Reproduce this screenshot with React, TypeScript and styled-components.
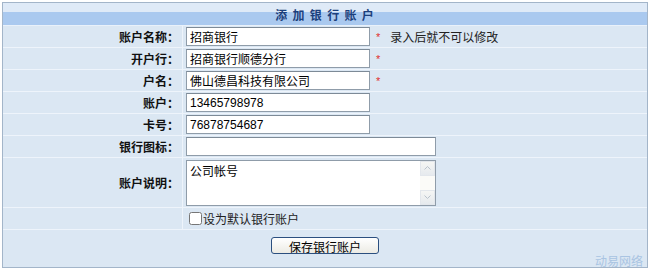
import styled, {createGlobalStyle} from "styled-components";

const Global = createGlobalStyle`
    html, body {
        margin: 0;
        padding: 0;
        background: #ffffff;
    }
    body {
        font-family: "Liberation Sans", "Noto Sans CJK SC", sans-serif;
        font-size: 12px;
        color: #000;
    }
`;

const fields = [
    {label: "账户名称：", value: "招商银行", required: true, hint: "录入后就不可以修改"},
    {label: "开户行：", value: "招商银行顺德分行", required: true},
    {label: "户名：", value: "佛山德昌科技有限公司", required: true},
    {label: "账户：", value: "13465798978"},
    {label: "卡号：", value: "76878754687"},
];

function Arrow({up}: { up?: boolean }) {
    return (
        <svg width="7" height="4" viewBox="0 0 7 4">
            <path d={up ? "M0.5 3.5 L3.5 0.5 L6.5 3.5" : "M0.5 0.5 L3.5 3.5 L6.5 0.5"}
                  fill="none" stroke="#b9c2cc" strokeWidth="1"/>
        </svg>
    );
}

export default function App() {
    return (
        <>
            <Global/>
            <Page>
                <Panel>
                    <Header>添 加 银 行 账 户</Header>

                    {fields.map((f) => (
                        <Row key={f.label}>
                            <Label>{f.label}</Label>
                            <Cell>
                                <TextInput $width={184} defaultValue={f.value}/>
                                {f.required && <Star>*</Star>}
                                {f.hint && <Hint>{f.hint}</Hint>}
                            </Cell>
                        </Row>
                    ))}

                    <Row>
                        <Label>银行图标：</Label>
                        <Cell>
                            <TextInput $width={250} defaultValue=""/>
                        </Cell>
                    </Row>

                    <Row $tall>
                        <Label>账户说明：</Label>
                        <Cell>
                            <MemoBox>
                                <Memo defaultValue="公司帐号"/>
                                <ScrollBar>
                                    <ScrollBtn><Arrow up/></ScrollBtn>
                                    <ScrollBtn><Arrow/></ScrollBtn>
                                </ScrollBar>
                            </MemoBox>
                        </Cell>
                    </Row>

                    <Row>
                        <Label/>
                        <Cell>
                            <Check>
                                <input type="checkbox"/>
                                设为默认银行账户
                            </Check>
                        </Cell>
                    </Row>

                    <Footer>
                        <SaveButton type="button">保存银行账户</SaveButton>
                        <Watermark>动易网络</Watermark>
                    </Footer>
                </Panel>
            </Page>
        </>
    );
}

const Page = styled.div`
    width: 650px;
    height: 270px;
    padding: 2px;
    box-sizing: border-box;
`;

const Panel = styled.div`
    border: 1px solid #a3b5c9;
    background: #dbe7f3;
    height: 266px;
    box-sizing: border-box;
    display: flex;
    flex-direction: column;
`;

const Header = styled.div`
    height: 21px;
    display: flex;
    align-items: center;
    justify-content: center;
    padding-top: 1px;
    background: linear-gradient(to bottom, #dfeaf7 0, #dfeaf7 9px, #aac9ef 9px, #aac9ef 100%);
    border-bottom: 1px solid #e9f1fa;
    color: #1c3f7c;
    font-weight: bold;
    font-size: 12px;
    letter-spacing: 1px;
`;

const Row = styled.div<{ $tall?: boolean }>`
    display: grid;
    grid-template-columns: 180px 1fr;
    height: ${(p) => (p.$tall ? "49px" : "21px")};
    border-bottom: 1px solid #eef4fb;
`;

const Label = styled.div`
    display: flex;
    align-items: center;
    justify-content: flex-end;
    padding-right: 3px;
    font-weight: bold;
    color: #111;
    border-right: 1px solid #eef4fb;
`;

const Cell = styled.div`
    display: flex;
    align-items: center;
    padding-left: 3px;
`;

const TextInput = styled.input<{ $width: number }>`
    width: ${(p) => p.$width}px;
    height: 19px;
    box-sizing: border-box;
    border: 1px solid #8f9ca9;
    border-top-color: #7d8a97;
    background: #fff;
    padding: 0 3px;
    font: 12px "Liberation Sans", "Noto Sans CJK SC", sans-serif;
    color: #000;
    outline: none;
`;

const Star = styled.span`
    color: #e0302f;
    margin-left: 6px;
    font-size: 11px;
`;

const Hint = styled.span`
    margin-left: 10px;
    color: #222;
`;

const MemoBox = styled.div`
    width: 250px;
    height: 46px;
    box-sizing: border-box;
    display: flex;
    border: 1px solid #8f9ca9;
    background: #fff;
`;

const Memo = styled.textarea`
    flex: 1;
    min-width: 0;
    border: none;
    background: transparent;
    padding: 1px 3px;
    font: 12px "Liberation Sans", "Noto Sans CJK SC", sans-serif;
    resize: none;
    overflow: hidden;
    outline: none;
`;

const ScrollBar = styled.div`
    width: 15px;
    display: flex;
    flex-direction: column;
    justify-content: space-between;
    background: #fbfbf8;
`;

const ScrollBtn = styled.div`
    height: 15px;
    display: flex;
    align-items: center;
    justify-content: center;
    background: linear-gradient(to bottom, #f5f6f4, #e6eaee);
    border: 1px solid #e3e7ec;
    box-sizing: border-box;
`;

const Check = styled.label`
    display: flex;
    align-items: center;
    gap: 1px;
    color: #222;

    input {
        margin: 0 0 0 3px;
        width: 13px;
        height: 13px;
    }
`;

const Footer = styled.div`
    flex: 1;
    position: relative;
    display: flex;
    justify-content: center;
    padding-top: 7px;
`;

const SaveButton = styled.button`
    width: 108px;
    height: 17px;
    padding: 0;
    border: 1px solid #2b4f7f;
    border-radius: 3px;
    background: linear-gradient(to bottom, #ffffff, #ecebe4);
    font: 12px "Liberation Sans", "Noto Sans CJK SC", sans-serif;
    color: #000;
`;

const Watermark = styled.span`
    position: absolute;
    right: 4px;
    bottom: -2px;
    font-size: 12px;
    color: #a9c4e2;
`;
